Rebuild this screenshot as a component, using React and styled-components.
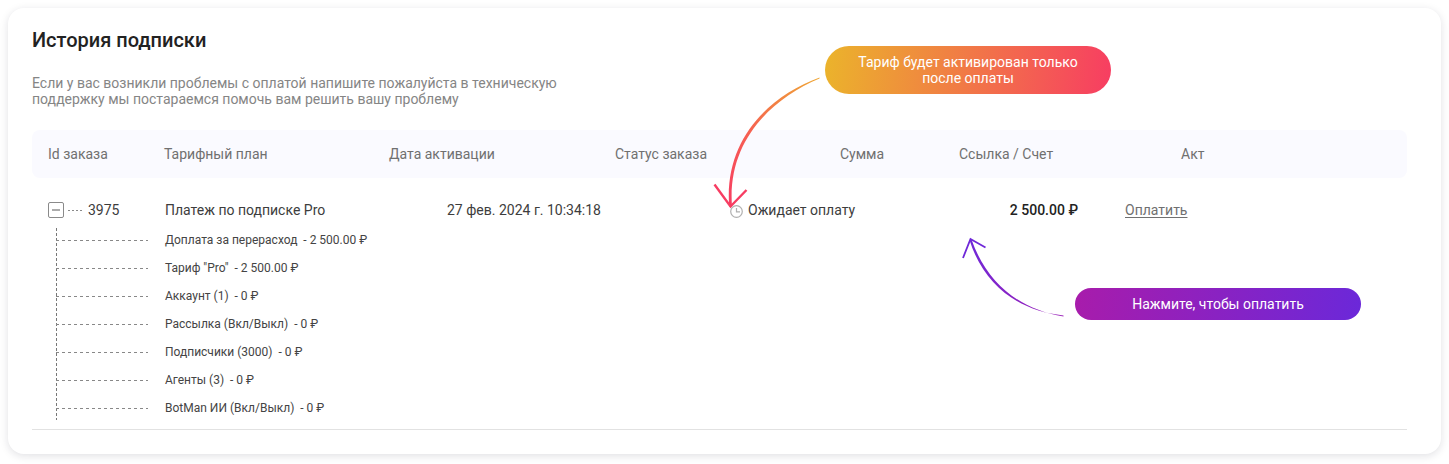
import React from "react";
import styled, { createGlobalStyle } from "styled-components";

const Global = createGlobalStyle`
  html, body { margin: 0; padding: 0; background: #fff; }
  body { font-family: Roboto, "Noto Sans", sans-serif; color: #222; }
`;

const Page = styled.div`
  width: 1449px;
  height: 464px;
  padding: 8px;
  box-sizing: border-box;
`;

const Card = styled.section`
  position: relative;
  width: 1433px;
  height: 446px;
  box-sizing: border-box;
  padding: 20px 34px 0 24px;
  background: #fff;
  border-radius: 16px;
  box-shadow: 0 2px 8px rgba(20, 20, 50, 0.13);
`;

const Title = styled.h2`
  margin: 0;
  font-size: 20px;
  line-height: 24px;
  font-weight: 500;
  color: #222;
`;

const Description = styled.p`
  margin: 23px 0 0;
  width: 540px;
  font-size: 14px;
  line-height: 16px;
  color: #858585;
`;

const HeaderRow = styled.div`
  display: grid;
  grid-template-columns: 116px 225px 226px 225px 119px 222px 1fr;
  align-items: center;
  height: 48px;
  margin-top: 23px;
  padding-left: 16px;
  background: #fafaff;
  border-radius: 8px;
`;

const HeaderCell = styled.div`
  font-size: 14px;
  line-height: 16px;
  color: #707070;
`;

const OrderRow = styled.div`
  display: grid;
  grid-template-columns: 117px 282px 283px 200px 148px 1fr;
  align-items: center;
  height: 20px;
  margin-top: 22px;
  padding-left: 16px;
  font-size: 14px;
  line-height: 20px;
  color: #3d3d3d;
`;

const IdCell = styled.div`
  display: flex;
  align-items: center;
`;

const Toggle = styled.span`
  display: flex;
  align-items: center;
  justify-content: center;
  box-sizing: border-box;
  width: 16px;
  height: 16px;
  border: 1px solid #8a8a8a;
  border-radius: 2px;
`;

const Minus = styled.span`
  width: 8px;
  height: 2px;
  background: #ababab;
`;

const IdDash = styled.span`
  width: 16px;
  height: 1px;
  margin: 0 4px;
  background: repeating-linear-gradient(90deg, #8a8a8a 0 2px, transparent 2px 4px);
`;

const StatusCell = styled.div`
  display: flex;
  align-items: center;
  gap: 5px;
`;

const ClockIcon = styled.svg`
  flex: none;
  margin-top: 2px;
`;

const Amount = styled.div`
  text-align: right;
  font-weight: 500;
  font-size: 14px;
  color: #222;
`;

const PayLink = styled.a`
  margin-left: 47px;
  color: #707070;
  text-decoration: underline;
  text-underline-offset: 2px;
  font-size: 14px;
`;

const Tree = styled.div`
  display: flex;
  flex-direction: column;
  margin: 6px 0 0 24px;
  background: repeating-linear-gradient(180deg, #777 0 3px, transparent 3px 5px) left 2px / 1px 192px no-repeat;
`;

const TreeRow = styled.div`
  flex: none;
  display: flex;
  align-items: center;
  height: 28px;
  font-size: 12px;
  line-height: 16px;
  color: #444;
`;

const Connector = styled.span`
  flex: none;
  width: 92px;
  height: 1px;
  margin-right: 17px;
  background: repeating-linear-gradient(90deg, #888 0 3px, transparent 3px 6px);
`;

const ItemText = styled.span`
  white-space: pre;
`;

const Divider = styled.div`
  height: 1px;
  margin-top: 7px;
  background: #e2e2e2;
`;

const Callout = styled.div`
  position: absolute;
  left: ${(p) => p.$left}px;
  top: ${(p) => p.$top}px;
  width: 286px;
  height: ${(p) => p.$height}px;
  box-sizing: border-box;
  padding: 0 24px;
  display: flex;
  align-items: center;
  justify-content: center;
  text-align: center;
  font-size: 14px;
  line-height: 16px;
  color: #fff;
  border-radius: 24px;
  background: ${(p) => p.$bg};
`;

const ArrowLayer = styled.svg`
  position: absolute;
  left: -8px;
  top: -8px;
  width: 1449px;
  height: 464px;
  pointer-events: none;
  fill: none;
`;

const columns = ["Id заказа", "Тарифный план", "Дата активации", "Статус заказа", "Сумма", "Ссылка / Счет", "Акт"];

const items = [
  "Доплата за перерасход  - 2 500.00 ₽",
  "Тариф \"Pro\"  - 2 500.00 ₽",
  "Аккаунт (1)  - 0 ₽",
  "Рассылка (Вкл/Выкл)  - 0 ₽",
  "Подписчики (3000)  - 0 ₽",
  "Агенты (3)  - 0 ₽",
  "BotMan ИИ (Вкл/Выкл)  - 0 ₽",
];

export default function App() {
  return (
    <Page>
      <Global />
      <Card>
        <Title>История подписки</Title>
        <Description>
          Если у вас возникли проблемы с оплатой напишите пожалуйста в техническую поддержку мы постараемся помочь вам решить вашу проблему
        </Description>
        <HeaderRow>
          {columns.map((c) => (
            <HeaderCell key={c}>{c}</HeaderCell>
          ))}
        </HeaderRow>
        <OrderRow>
          <IdCell>
            <Toggle><Minus /></Toggle>
            <IdDash />
            3975
          </IdCell>
          <div>Платеж по подписке Pro</div>
          <div>27 фев. 2024 г. 10:34:18</div>
          <StatusCell>
            <ClockIcon width="13" height="13" viewBox="0 0 13 13" fill="none" stroke="#b0b0b0" strokeWidth="1.2">
              <circle cx="6.5" cy="6.5" r="5.8" />
              <path d="M6.5 3V6.8H10" />
            </ClockIcon>
            Ожидает оплату
          </StatusCell>
          <Amount>2 500.00 ₽</Amount>
          <div><PayLink>Оплатить</PayLink></div>
        </OrderRow>
        <Tree>
          {items.map((t) => (
            <TreeRow key={t}>
              <Connector />
              <ItemText>{t}</ItemText>
            </TreeRow>
          ))}
        </Tree>
        <Divider />
        <Callout $left={817} $top={38} $height={48} $bg="linear-gradient(97deg, #ebb42b 0%, #f73d62 100%)">
          Тариф будет активирован только после оплаты
        </Callout>
        <Callout $left={1067} $top={280} $height={32} $bg="linear-gradient(97deg, #a81cab 0%, #6b28d9 100%)">
          Нажмите, чтобы оплатить
        </Callout>
        <ArrowLayer viewBox="0 0 1449 464">
          <defs>
            <linearGradient id="warm" gradientUnits="userSpaceOnUse" x1="819" y1="78" x2="730" y2="207">
              <stop offset="0" stopColor="#efa634" />
              <stop offset="0.55" stopColor="#f65f52" />
              <stop offset="1" stopColor="#f73d62" />
            </linearGradient>
            <linearGradient id="violet" gradientUnits="userSpaceOnUse" x1="1063" y1="316" x2="970" y2="239">
              <stop offset="0" stopColor="#9a20b8" />
              <stop offset="1" stopColor="#6f28d8" />
            </linearGradient>
          </defs>
          <path d="M819.5 77.6C768 96.6 724 140 729.2 206.5L732 206.5C727 142 770 99.6 819.5 78.6Z" fill="url(#warm)" />
          <path d="M714.5 184.5L730.5 206.5L746.5 190" stroke="#f73d62" strokeWidth="2.4" />
          <path d="M1063.5 315.4C1020 311.5 984 286 969.5 240L971.5 239.5C987 284 1021 310 1063.5 316.4Z" fill="url(#violet)" />
          <path d="M963 258L970.5 239L985.5 247.5" stroke="#6f28d8" strokeWidth="1.8" />
        </ArrowLayer>
      </Card>
    </Page>
  );
}
